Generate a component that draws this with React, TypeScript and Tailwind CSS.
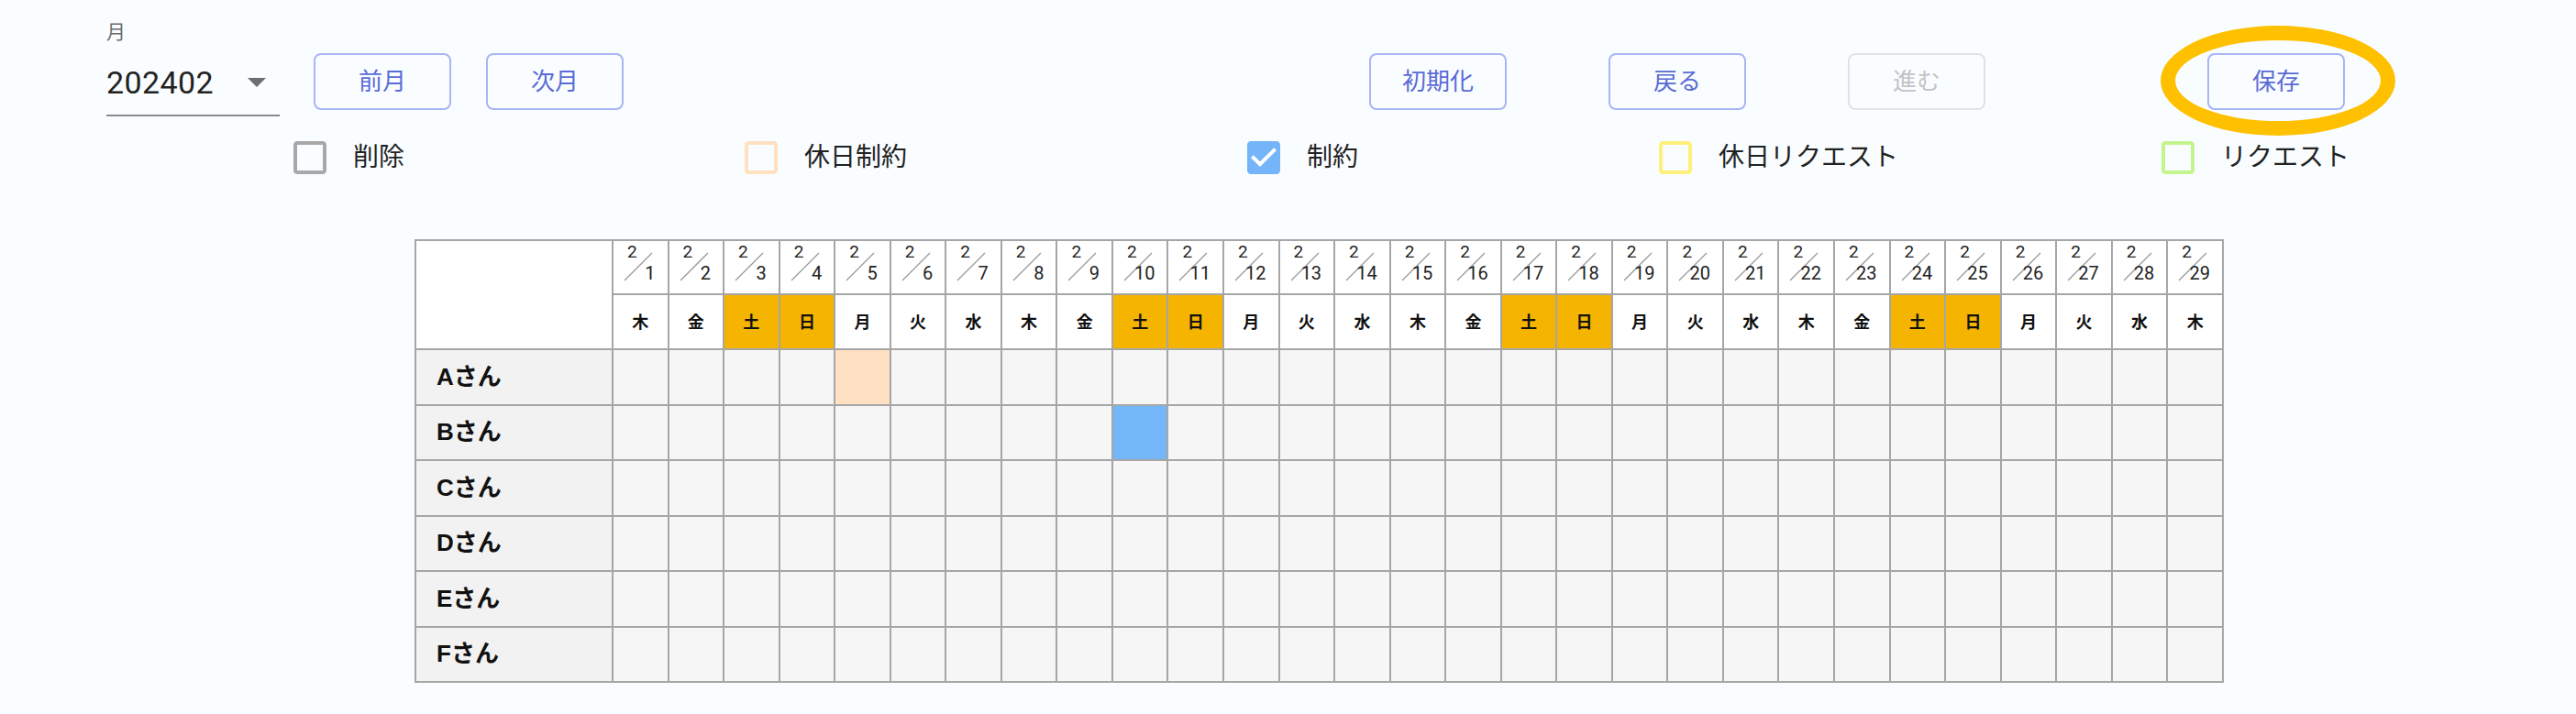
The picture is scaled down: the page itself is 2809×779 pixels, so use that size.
import React from "react";

const DOW = ["木", "金", "土", "日", "月", "火", "水"];
const NAMES = ["A", "B", "C", "D", "E", "F"];

const days = Array.from({ length: 29 }, (_, i) => i + 1);

function dow(d: number) {
  return DOW[(d - 1) % 7];
}
function isWeekend(d: number) {
  const w = dow(d);
  return w === "土" || w === "日";
}

const BOX_UNCHECKED =
  "M19 5v14H5V5h14m0-2H5c-1.1 0-2 .9-2 2v14c0 1.1.9 2 2 2h14c1.1 0 2-.9 2-2V5c0-1.1-.9-2-2-2z";
const BOX_CHECKED =
  "M19 3H5c-1.11 0-2 .9-2 2v14c0 1.1.89 2 2 2h14c1.11 0 2-.9 2-2V5c0-1.1-.89-2-2-2zm-9 14l-5-5 1.41-1.41L10 14.17l7.59-7.59L19 8l-9 9z";

function Check({ color, checked, label, w }: { color: string; checked?: boolean; label: string; w: string }) {
  return (
    <div className={`flex items-center ${w}`}>
      <svg width="48" height="48" viewBox="0 0 24 24" className="shrink-0">
        {checked ? (
          <>
            <rect x="4" y="4" width="16" height="16" fill="#ffffff" />
            <path d={BOX_CHECKED} fill={color} />
          </>
        ) : (
          <path d={BOX_UNCHECKED} fill={color} />
        )}
      </svg>
      <span className="ml-[23px] text-[28px] leading-[36px] text-[#222222]">{label}</span>
    </div>
  );
}

function Btn({ children, disabled, className = "" }: { children: React.ReactNode; disabled?: boolean; className?: string }) {
  return (
    <button
      className={`h-[62px] w-[150px] rounded-[8px] border-2 text-[26px] leading-none ${
        disabled ? "border-[#e2e2e2] text-[#c4c4c4]" : "border-[#a9b5f4] text-[#5a6bd6]"
      } bg-transparent ${className}`}
    >
      {children}
    </button>
  );
}

export default function App() {
  return (
    <div
      className="min-h-screen w-full bg-[#f9fdff]"
      style={{ fontFamily: "Roboto, 'Noto Sans CJK JP', sans-serif" }}
    >
      {/* top row */}
      <div className="flex items-start pt-[22px] pl-[116px]">
        <div className="w-[189px]">
          <div className="text-[21px] leading-[26px] text-[#6b6b6b]">月</div>
          <div className="mt-[22px] flex items-center justify-between border-b-2 border-[#8a8a8a] pb-[15px] pr-[15px]">
            <span className="text-[34px] leading-[40px] tracking-[0.4px] text-[#222222]">202402</span>
            <svg width="20" height="10" viewBox="0 0 20 10">
              <path d="M0 0 L20 0 L10 10 Z" fill="#6e6e6e" />
            </svg>
          </div>
        </div>
        <Btn className="ml-[37px] mt-[36px]">前月</Btn>
        <Btn className="ml-[38px] mt-[36px]">次月</Btn>
        <Btn className="ml-[813px] mt-[36px]">初期化</Btn>
        <Btn className="ml-[111px] mt-[36px]">戻る</Btn>
        <Btn className="ml-[111px] mt-[36px]" disabled>
          進む
        </Btn>
        <div className="relative ml-[242px] mt-[36px]">
          <Btn>保存</Btn>
          <div className="pointer-events-none absolute left-[-51px] top-[-30px] h-[120px] w-[256px] rounded-[50%] border-[16px] border-[#ffc000]" />
        </div>
      </div>

      {/* checkbox row */}
      <div className="mt-[21px] flex items-center pl-[314px]">
        <Check w="w-[492px]" color="#a8a8a8" label="削除" />
        <Check w="w-[548px]" color="#ffe0c0" label="休日制約" />
        <Check w="w-[449px]" color="#74b4f8" checked label="制約" />
        <Check w="w-[548px]" color="#fff07a" label="休日リクエスト" />
        <Check w="w-[300px]" color="#c2f58c" label="リクエスト" />
      </div>

      {/* table */}
      <div className="mt-[65px] pl-[452px] pb-[30px]">
        <table
          className="table-fixed border-collapse w-[1973px]"
          style={{ fontFamily: "Roboto, 'Noto Sans CJK JP', sans-serif" }}
        >
          <colgroup>
            <col className="w-[215px]" />
            {days.map((d) => (
              <col key={d} />
            ))}
          </colgroup>
          <thead>
            <tr className="h-[59px]">
              <th rowSpan={2} className="border-2 border-[#a6a6a6] bg-white" />
              {days.map((d) => (
                <th key={d} className="border-2 border-[#a6a6a6] bg-white p-0 font-normal">
                  <div className="relative h-[57px] w-full">
                    <svg className="absolute left-[11px] top-[12px]" width="32" height="32" viewBox="0 0 32 32">
                      <line x1="1" y1="31" x2="31" y2="1" stroke="#9a9a9a" strokeWidth="1.3" />
                    </svg>
                    <span className="absolute left-[15px] top-[2px] text-[19px] leading-[19px] text-[#222222]">2</span>
                    <span className="absolute right-[13px] top-[25px] text-[20px] leading-[20px] text-[#222222]">{d}</span>
                  </div>
                </th>
              ))}
            </tr>
            <tr className="h-[60px]">
              {days.map((d) => (
                <th
                  key={d}
                  className={`border-2 border-[#a6a6a6] p-0 text-center text-[18px] font-bold text-[#111111] ${
                    isWeekend(d) ? "bg-[#f5b400]" : "bg-white"
                  }`}
                >
                  {dow(d)}
                </th>
              ))}
            </tr>
          </thead>
          <tbody>
            {NAMES.map((n, ri) => (
              <tr key={n} className="h-[60.5px]">
                <td
                  className="border-2 border-[#a6a6a6] bg-[#f2f2f2] pl-[22px] text-[26px] font-bold text-[#111111]"
                  style={{ fontFamily: "'Liberation Sans', 'Noto Sans CJK JP', sans-serif" }}
                >
                  {n}さん
                </td>
                {days.map((d) => {
                  let bg = "bg-[#f6f6f6]";
                  if (ri === 0 && d === 5) bg = "bg-[#ffe0c2]";
                  if (ri === 1 && d === 10) bg = "bg-[#74b7f8]";
                  return <td key={d} className={`border-2 border-[#a6a6a6] ${bg}`} />;
                })}
              </tr>
            ))}
          </tbody>
        </table>
      </div>
    </div>
  );
}
